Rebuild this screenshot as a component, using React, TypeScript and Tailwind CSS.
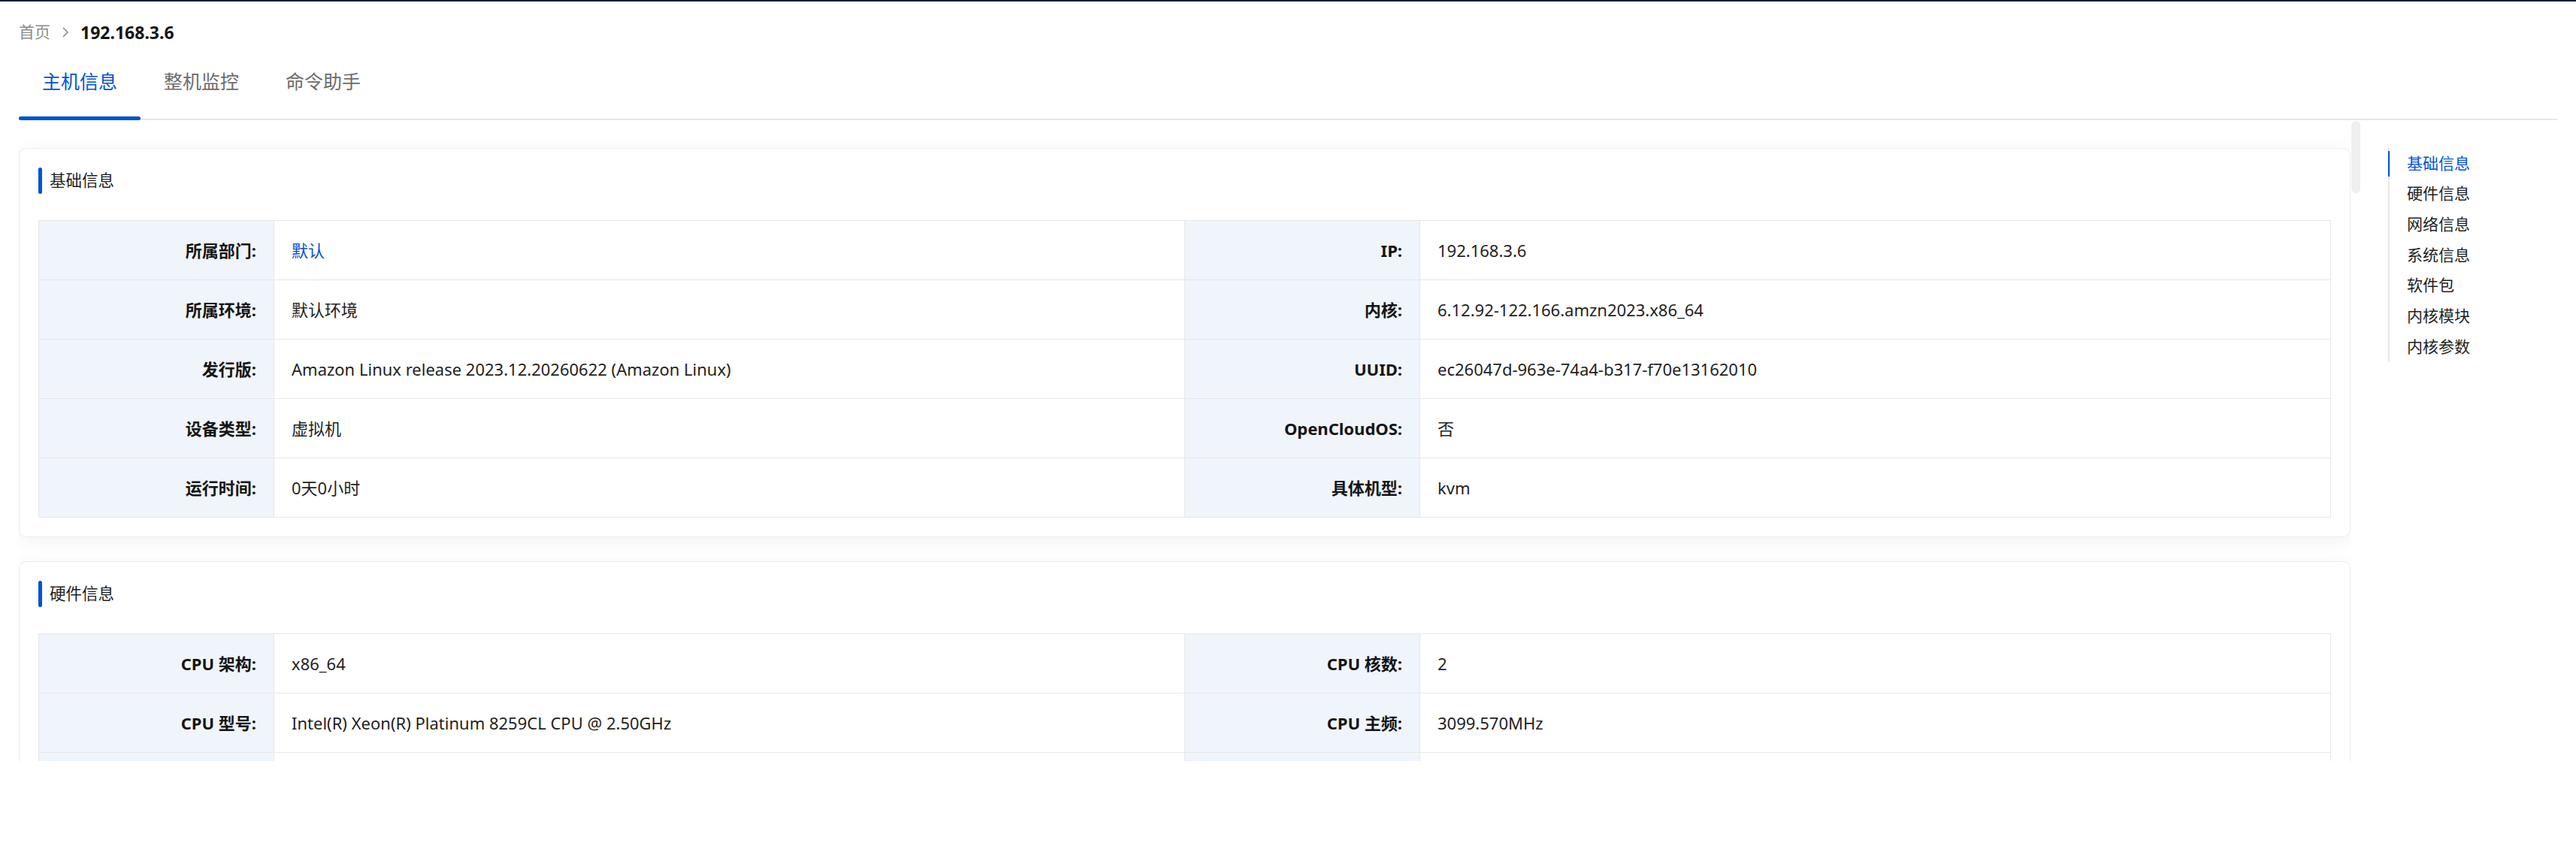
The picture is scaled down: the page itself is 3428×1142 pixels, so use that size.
import React from "react";

interface Field {
  label: string;
  value: string;
  link?: boolean;
}

interface Section {
  title: string;
  rows: [Field, Field][];
}

const sections: Section[] = [
  {
    title: "基础信息",
    rows: [
      [
        { label: "所属部门:", value: "默认", link: true },
        { label: "IP:", value: "192.168.3.6" },
      ],
      [
        { label: "所属环境:", value: "默认环境" },
        { label: "内核:", value: "6.12.92-122.166.amzn2023.x86_64" },
      ],
      [
        { label: "发行版:", value: "Amazon Linux release 2023.12.20260622 (Amazon Linux)" },
        { label: "UUID:", value: "ec26047d-963e-74a4-b317-f70e13162010" },
      ],
      [
        { label: "设备类型:", value: "虚拟机" },
        { label: "OpenCloudOS:", value: "否" },
      ],
      [
        { label: "运行时间:", value: "0天0小时" },
        { label: "具体机型:", value: "kvm" },
      ],
    ],
  },
  {
    title: "硬件信息",
    rows: [
      [
        { label: "CPU 架构:", value: "x86_64" },
        { label: "CPU 核数:", value: "2" },
      ],
      [
        { label: "CPU 型号:", value: "Intel(R) Xeon(R) Platinum 8259CL CPU @ 2.50GHz" },
        { label: "CPU 主频:", value: "3099.570MHz" },
      ],
      [
        { label: "内存大小:", value: "3.7GB" },
        { label: "磁盘大小:", value: "20GB" },
      ],
      [
        { label: "网卡数量:", value: "1" },
        { label: "显卡:", value: "-" },
      ],
    ],
  },
];

const anchors = ["基础信息", "硬件信息", "网络信息", "系统信息", "软件包", "内核模块", "内核参数"];

const InfoCard = ({ section }: { section: Section }) => (
  <div className="rounded-[10px] border border-[#ececec] bg-white p-[25px] shadow-[0_4px_24px_rgba(0,0,0,0.06)]">
    {/* Title */}
    <div className="flex h-[35px] items-center">
      <div className="h-[35px] w-[5px] rounded-full bg-[#0052d9]" />
      <span className="ml-[10px] text-[21.5px] text-[#1f1f1f]">{section.title}</span>
    </div>

    {/* Descriptions table */}
    <div className="mt-[35px] grid grid-cols-[313px_1fr_313px_1fr] border-l border-t border-[#e7e7e7]">
      {section.rows.map((row, i) => (
        <React.Fragment key={i}>
          {row.map((f) => (
            <React.Fragment key={f.label}>
              <div className="flex h-[79px] items-center justify-end border-b border-r border-[#e7e7e7] bg-[#f0f4fb] pr-[23px] text-[22px] font-bold text-[#141414]">
                {f.label}
              </div>
              <div
                className={`flex h-[79px] items-center border-b border-r border-[#e7e7e7] pl-[23px] text-[22px] ${
                  f.link ? "text-[#0052d9]" : "text-[#1f1f1f]"
                }`}
              >
                {f.value}
              </div>
            </React.Fragment>
          ))}
        </React.Fragment>
      ))}
    </div>
  </div>
);

const App = () => {
  return (
    <div className="h-[1142px] w-full overflow-hidden bg-white font-['Noto_Sans','Noto_Sans_CJK_SC',sans-serif]">
      <div className="h-[2px] bg-[#0f1d3a]" />

      <div className="px-[25px]">
        {/* Breadcrumb */}
        <div className="mt-[26px] flex h-[30px] items-center">
          <span className="text-[21px] text-[#8c8c8c]">首页</span>
          <svg className="mx-[14px]" width="12" height="16" viewBox="0 0 12 16" fill="none">
            <path d="M3 2l6 6-6 6" stroke="#8c8c8c" strokeWidth="1.6" />
          </svg>
          <span className="text-[23px] font-bold text-[#141414]">192.168.3.6</span>
        </div>

        {/* Tabs */}
        <div className="flex border-b-2 border-[#e7e7e7]">
          {["主机信息", "整机监控", "命令助手"].map((t, i) => (
            <div
              key={t}
              className={`relative flex h-[100px] items-center px-[31px] pt-[2px] text-[25px] ${
                i === 0 ? "text-[#0052d9]" : "text-[#6b6b6b]"
              }`}
            >
              {t}
              {i === 0 && (
                <div className="absolute bottom-[-2px] left-0 right-0 h-[5px] rounded-full bg-[#0052d9]" />
              )}
            </div>
          ))}
        </div>

        <div className="flex">
          {/* Scroll content */}
          <div className="h-[853px] flex-1 overflow-hidden">
            <div className="flex flex-col gap-[32px] pt-[37px]">
              {sections.map((s) => (
                <InfoCard key={s.title} section={s} />
              ))}
            </div>
          </div>

          {/* Scrollbar */}
          <div className="ml-[1px] w-[12px]">
            <div className="mt-[1px] h-[96px] rounded-full bg-[#efefef]" />
          </div>

          {/* Anchor nav */}
          <div className="w-[262px] pl-[37px] pt-[37px]">
            <div className="border-l-2 border-[#e7e7e7]">
              {anchors.map((a, i) => (
                <div
                  key={a}
                  className={`relative flex h-[40.7px] items-center pl-[23px] text-[21px] ${
                    i === 0 ? "text-[#0052d9]" : "text-[#1f1f1f]"
                  }`}
                >
                  {i === 0 && (
                    <div className="absolute bottom-[3px] left-[-2px] top-[4px] w-[2px] bg-[#0052d9]" />
                  )}
                  {a}
                </div>
              ))}
            </div>
          </div>
        </div>
      </div>
    </div>
  );
};

export default App;
